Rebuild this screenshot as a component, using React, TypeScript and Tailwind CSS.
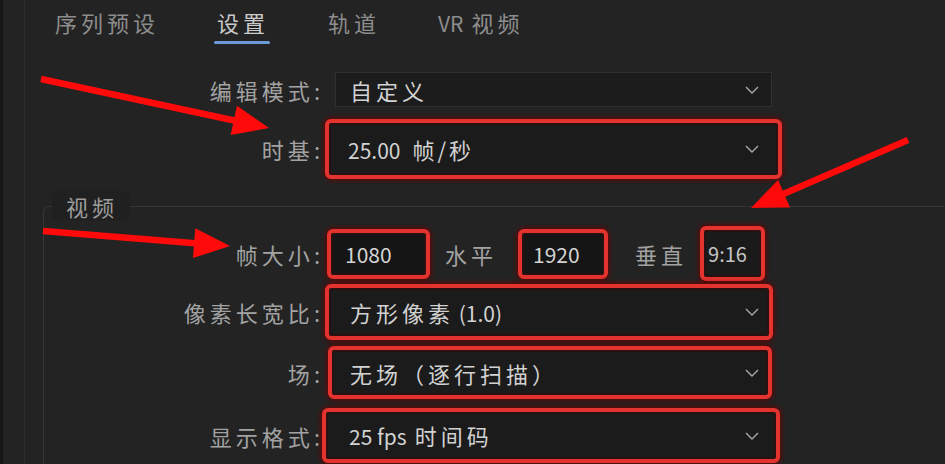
import React from 'react';

type ArrowProps = { x1: number; y1: number; x2: number; y2: number };

function Arrow({ x1, y1, x2, y2 }: ArrowProps) {
    const dx = x2 - x1;
    const dy = y2 - y1;
    const len = Math.hypot(dx, dy);
    const ux = dx / len;
    const uy = dy / len;
    const head = 36;
    const half = 15;
    const bx = x2 - ux * head;
    const by = y2 - uy * head;
    const pts = [
        `${x2},${y2}`,
        `${bx - uy * half},${by + ux * half}`,
        `${bx + uy * half},${by - ux * half}`,
    ].join(' ');
    return (
        <g>
            <line x1={x1} y1={y1} x2={bx + ux * 4} y2={by + uy * 4} stroke="#ff0a0a" strokeWidth={6.5} />
            <polygon points={pts} fill="#ff0a0a" />
        </g>
    );
}

function Chevron() {
    return (
        <svg width="14" height="8" viewBox="0 0 14 8" className="shrink-0">
            <polyline points="1,1 7,7 13,1" fill="none" stroke="#a9a9a9" strokeWidth="1.4" />
        </svg>
    );
}

function Label({ text, width }: { text: string; width: string }) {
    return (
        <div className={`${width} shrink-0 text-right text-[22px] leading-[30px] text-[#a2a2a2]`}>
            <span className="tracking-[4px]">{text}</span>
            <span>:</span>
        </div>
    );
}

function RedBox({ className, children }: { className: string; children: React.ReactNode }) {
    return (
        <div
            className={`${className} shrink-0 rounded-[6px] border-[4px] border-[#e3332f] bg-[#2a1111] p-[2px] shadow-[0_0_5px_1px_rgba(110,0,0,0.95)]`}
        >
            {children}
        </div>
    );
}

export default function App() {
    return (
        <div className="relative h-[464px] w-[945px] overflow-hidden border-l-[3px] border-[#161616] bg-[#232323] font-['Noto_Sans_CJK_SC',sans-serif]">
            <div className="ml-[21px] flex h-full flex-col border-l border-[#2e2e2e]">
                {/* tabs */}
                <div className="flex h-[48px] gap-[58px] pl-[30px] pt-[7px] text-[22px] leading-[30px]">
                    <div className="tracking-[4px] text-[#8d8d8d]">序列预设</div>
                    <div className="flex flex-col">
                        <span className="tracking-[4px] text-[#cacaca]">设置</span>
                        <div className="-ml-[3px] mt-[4px] h-[3px] w-[56px] rounded-full bg-[#6a9bd6]" />
                    </div>
                    <div className="tracking-[4px] text-[#8d8d8d]">轨道</div>
                    <div className="text-[#8d8d8d]">
                        <span className="text-[21px]">VR</span>
                        <span className="ml-[8px] tracking-[4px]">视频</span>
                    </div>
                </div>

                {/* 编辑模式 */}
                <div className="mt-[28px] flex h-[35px] items-center">
                    <Label text="编辑模式" width="w-[295px]" />
                    <div className="ml-[15px] flex h-[35px] w-[437px] items-center justify-between border border-[#303030] bg-[#1c1c1c] pl-[14px] pr-[12px]">
                        <span className="text-[22px] leading-[30px] tracking-[4px] text-[#d2d2d2]">自定义</span>
                        <Chevron />
                    </div>
                </div>

                {/* 时基 */}
                <div className="mt-[12px] flex h-[60px] items-center">
                    <Label text="时基" width="w-[295px]" />
                    <RedBox className="ml-[5px] h-[60px] w-[457px]">
                        <div className="flex h-full items-center justify-between bg-[#1b1b1b] pl-[17px] pr-[17px]">
                            <span className="text-[22px] leading-[30px] text-[#d2d2d2]">
                                <span className="text-[21px]">25.00</span>
                                <span className="ml-[12px] tracking-[3px]">帧/秒</span>
                            </span>
                            <Chevron />
                        </div>
                    </RedBox>
                </div>

                {/* 视频 */}
                <fieldset className="ml-[18px] mt-[12px] rounded-tl-[6px] border-l border-t border-[#363636] pb-[10px]">
                    <legend className="ml-[8px] rounded-[6px] bg-[#202020] pl-[14px] pr-[12px] text-[22px] leading-[30px] tracking-[4px] text-[#9c9c9c]">
                        视频
                    </legend>

                    {/* 帧大小 */}
                    <div className="mt-[5px] flex h-[55px] items-center">
                        <Label text="帧大小" width="w-[276px]" />
                        <RedBox className="ml-[7px] h-[50px] w-[103px]">
                            <div className="flex h-full items-center bg-[#151515] pl-[12px] text-[21px] leading-[30px] text-[#d4d4d4]">
                                1080
                            </div>
                        </RedBox>
                        <span className="ml-[15px] text-[22px] leading-[30px] tracking-[4px] text-[#a2a2a2]">水平</span>
                        <RedBox className="ml-[21px] h-[50px] w-[90px]">
                            <div className="flex h-full items-center bg-[#151515] pl-[9px] text-[21px] leading-[30px] text-[#d4d4d4]">
                                1920
                            </div>
                        </RedBox>
                        <span className="ml-[27px] text-[22px] leading-[30px] tracking-[4px] text-[#a2a2a2]">垂直</span>
                        <RedBox className="ml-[13px] h-[55px] w-[65px]">
                            <div className="flex h-full items-center bg-[#1a1a1a] pl-[2px] text-[20px] leading-[30px] text-[#c4c4c4]">
                                9:16
                            </div>
                        </RedBox>
                    </div>

                    {/* 像素长宽比 */}
                    <div className="mt-[3px] flex h-[56px] items-center">
                        <Label text="像素长宽比" width="w-[276px]" />
                        <RedBox className="ml-[5px] h-[56px] w-[448px]">
                            <div className="flex h-full items-center justify-between bg-[#1b1b1b] pl-[19px] pr-[8px]">
                                <span className="text-[22px] leading-[30px] text-[#d2d2d2]">
                                    <span className="tracking-[4px]">方形像素</span>
                                    <span className="text-[21px]"> (1.0)</span>
                                </span>
                                <Chevron />
                            </div>
                        </RedBox>
                    </div>

                    {/* 场 */}
                    <div className="mt-[6px] flex h-[53px] items-center">
                        <Label text="场" width="w-[276px]" />
                        <RedBox className="ml-[8px] h-[53px] w-[444px]">
                            <div className="flex h-full items-center justify-between bg-[#1b1b1b] pl-[16px] pr-[7px]">
                                <span className="text-[22px] leading-[30px] tracking-[4px] text-[#d2d2d2]">
                                    无场（逐行扫描）
                                </span>
                                <Chevron />
                            </div>
                        </RedBox>
                    </div>

                    {/* 显示格式 */}
                    <div className="mt-[9px] flex h-[55px] items-center">
                        <Label text="显示格式" width="w-[276px]" />
                        <RedBox className="ml-[2px] h-[55px] w-[458px]">
                            <div className="flex h-full items-center justify-between bg-[#1b1b1b] pl-[21px] pr-[15px]">
                                <span className="text-[22px] leading-[30px] text-[#d2d2d2]">
                                    <span className="text-[21px]">25 fps</span>
                                    <span className="ml-[8px] tracking-[4px]">时间码</span>
                                </span>
                                <Chevron />
                            </div>
                        </RedBox>
                    </div>
                </fieldset>
            </div>

            <svg className="pointer-events-none absolute inset-0" width="945" height="464" viewBox="0 0 945 464">
                <Arrow x1={38} y1={79} x2={266} y2={128} />
                <Arrow x1={905} y1={140} x2={748} y2={208} />
                <Arrow x1={40} y1={231} x2={227} y2={246} />
            </svg>
        </div>
    );
}
